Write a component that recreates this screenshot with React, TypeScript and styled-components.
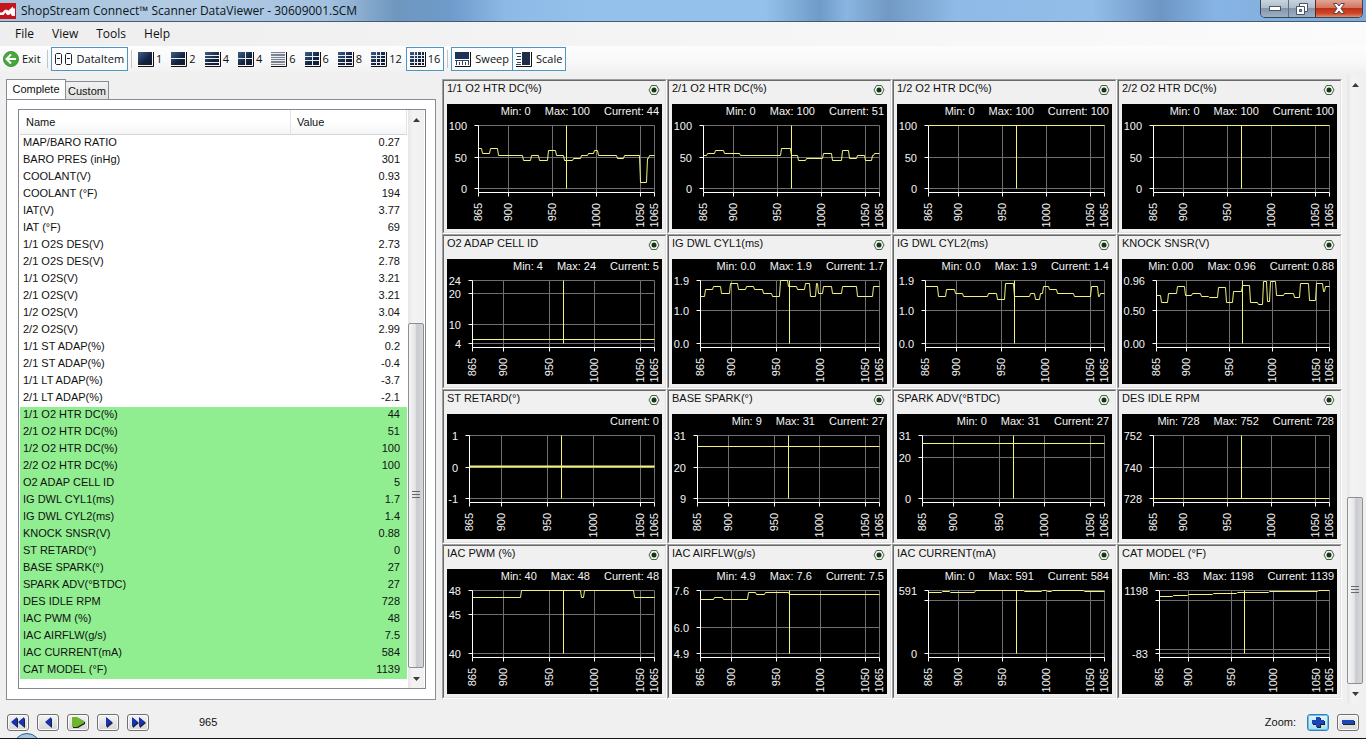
import React from 'react';
import styled, { createGlobalStyle, css } from 'styled-components';

const GlobalStyle = createGlobalStyle`
  * { box-sizing: border-box; }
  body {
    margin: 0;
    background: #f0f0f0;
    color: #111;
    font-family: "Liberation Sans", Arial, sans-serif;
    font-size: 11px;
    line-height: 17px;
  }
  button { font: inherit; color: inherit; margin: 0; padding: 0; cursor: default; }
`;

/* ---------- data ---------- */

type Level = [number, number];

interface Signal {
  name: string;
  stats: string[];
  ticks: { value: number; label?: string }[];
  plotLeft: number;
  trace: Level[];
  thick?: boolean;
}

const tick = (...labels: string[]) => labels.map((label) => ({ value: Number(label), label }));
const percent = tick('100', '50', '0');

const signals: Signal[] = [
  {
    name: '1/1 O2 HTR DC(%)', stats: ['Min: 0', 'Max: 100', 'Current: 44'], ticks: percent, plotLeft: 31,
    trace: [[31, 44], [35, 49], [43, 44], [51, 51], [76, 56], [84, 51], [92, 56], [101, 46], [109, 51], [117, 56], [126, 54], [134, 51], [141, 49], [147, 46], [151, 51], [170, 54], [177, 51], [193, 78], [200, 54], [202, 51]],
  },
  {
    name: '2/1 O2 HTR DC(%)', stats: ['Min: 0', 'Max: 100', 'Current: 51'], ticks: percent, plotLeft: 31,
    trace: [[31, 51], [35, 49], [43, 46], [52, 49], [68, 51], [109, 44], [119, 51], [126, 56], [134, 54], [151, 49], [160, 56], [170, 46], [177, 54], [185, 51], [193, 56], [200, 51], [202, 49]],
  },
  { name: '1/2 O2 HTR DC(%)', stats: ['Min: 0', 'Max: 100', 'Current: 100'], ticks: percent, plotLeft: 31, trace: [[31, 21]] },
  { name: '2/2 O2 HTR DC(%)', stats: ['Min: 0', 'Max: 100', 'Current: 100'], ticks: percent, plotLeft: 31, trace: [[31, 21]] },
  { name: 'O2 ADAP CELL ID', stats: ['Min: 4', 'Max: 24', 'Current: 5'], ticks: tick('24', '20', '10', '4'), plotLeft: 25, trace: [[25, 80]] },
  {
    name: 'IG DWL CYL1(ms)', stats: ['Min: 0.0', 'Max: 1.9', 'Current: 1.7'], ticks: tick('1.9', '1.0', '0.0'), plotLeft: 28,
    trace: [[28, 37], [33, 30], [41, 27], [49, 34], [58, 24], [66, 30], [74, 27], [82, 30], [91, 34], [100, 37], [108, 21], [116, 27], [125, 30], [133, 24], [138, 37], [144, 24], [146, 34], [151, 27], [160, 34], [170, 27], [185, 37], [201, 27]],
  },
  {
    name: 'IG DWL CYL2(ms)', stats: ['Min: 0.0', 'Max: 1.9', 'Current: 1.4'], ticks: tick('1.9', '1.0', '0.0'), plotLeft: 28,
    trace: [[28, 27], [41, 37], [49, 30], [58, 34], [66, 37], [91, 34], [100, 40], [108, 24], [117, 37], [133, 34], [138, 40], [143, 34], [146, 27], [152, 30], [160, 34], [177, 37], [194, 27], [201, 37], [203, 34]],
  },
  {
    name: 'KNOCK SNSR(V)', stats: ['Min: 0.00', 'Max: 0.96', 'Current: 0.88'], ticks: tick('0.96', '0.50', '0.00'), plotLeft: 34,
    trace: [[34, 36], [39, 43], [46, 34], [55, 27], [63, 36], [70, 34], [79, 37], [87, 38], [96, 28], [104, 43], [111, 32], [120, 26], [128, 43], [136, 45], [141, 22], [145, 42], [148, 22], [154, 36], [162, 34], [172, 38], [178, 24], [187, 41], [194, 24], [201, 32], [203, 27]],
  },
  { name: 'ST RETARD(°)', stats: ['Current: 0'], ticks: tick('1', '0', '-1'), plotLeft: 22, trace: [[22, 52]], thick: true },
  { name: 'BASE SPARK(°)', stats: ['Min: 9', 'Max: 31', 'Current: 27'], ticks: tick('31', '20', '9'), plotLeft: 25, trace: [[25, 32]] },
  { name: 'SPARK ADV(°BTDC)', stats: ['Min: 0', 'Max: 31', 'Current: 27'], ticks: tick('31', '20', '0'), plotLeft: 25, trace: [[25, 29]] },
  { name: 'DES IDLE RPM', stats: ['Min: 728', 'Max: 752', 'Current: 728'], ticks: tick('752', '740', '728'), plotLeft: 31, trace: [[31, 84]] },
  {
    name: 'IAC PWM (%)', stats: ['Min: 40', 'Max: 48', 'Current: 48'], ticks: tick('48', '45', '40'), plotLeft: 25,
    trace: [[25, 28], [74, 21], [134, 28], [137, 21], [187, 28]],
  },
  {
    name: 'IAC AIRFLW(g/s)', stats: ['Min: 4.9', 'Max: 7.6', 'Current: 7.5'], ticks: tick('7.6', '6.0', '4.9'), plotLeft: 28,
    trace: [[28, 30], [42, 28], [51, 30], [76, 23], [84, 25], [93, 23], [117, 25]],
  },
  {
    name: 'IAC CURRENT(mA)', stats: ['Min: 0', 'Max: 591', 'Current: 584'],
    ticks: [{ value: 591, label: '591' }, { value: 500 }, { value: 0, label: '0' }], plotLeft: 31,
    trace: [[31, 23], [45, 22], [53, 23], [78, 21], [127, 22], [145, 21], [150, 22], [155, 21], [187, 22]],
  },
  {
    name: 'CAT MODEL (°F)', stats: ['Min: -83', 'Max: 1198', 'Current: 1139'],
    ticks: [{ value: 1198, label: '1198' }, { value: 1000 }, { value: 0 }, { value: -83, label: '-83' }], plotLeft: 37,
    trace: [[37, 27], [51, 26], [66, 25], [91, 24], [115, 23], [147, 22], [196, 21]],
  },
];

const readings: [string, string, boolean?][] = [
  ['MAP/BARO RATIO', '0.27'], ['BARO PRES (inHg)', '301'], ['COOLANT(V)', '0.93'], ['COOLANT (°F)', '194'],
  ['IAT(V)', '3.77'], ['IAT (°F)', '69'], ['1/1 O2S DES(V)', '2.73'], ['2/1 O2S DES(V)', '2.78'],
  ['1/1 O2S(V)', '3.21'], ['2/1 O2S(V)', '3.21'], ['1/2 O2S(V)', '3.04'], ['2/2 O2S(V)', '2.99'],
  ['1/1 ST ADAP(%)', '0.2'], ['2/1 ST ADAP(%)', '-0.4'], ['1/1 LT ADAP(%)', '-3.7'], ['2/1 LT ADAP(%)', '-2.1'],
  ['1/1 O2 HTR DC(%)', '44', true], ['2/1 O2 HTR DC(%)', '51', true], ['1/2 O2 HTR DC(%)', '100', true],
  ['2/2 O2 HTR DC(%)', '100', true], ['O2 ADAP CELL ID', '5', true], ['IG DWL CYL1(ms)', '1.7', true],
  ['IG DWL CYL2(ms)', '1.4', true], ['KNOCK SNSR(V)', '0.88', true], ['ST RETARD(°)', '0', true],
  ['BASE SPARK(°)', '27', true], ['SPARK ADV(°BTDC)', '27', true], ['DES IDLE RPM', '728', true],
  ['IAC PWM (%)', '48', true], ['IAC AIRFLW(g/s)', '7.5', true], ['IAC CURRENT(mA)', '584', true],
  ['CAT MODEL (°F)', '1139', true],
];

const layouts: { cols: number; rows: number; label: string; pale?: boolean; active?: boolean }[] = [
  { cols: 1, rows: 1, label: '1' }, { cols: 1, rows: 2, label: '2' }, { cols: 1, rows: 4, label: '4' },
  { cols: 2, rows: 2, label: '4' }, { cols: 1, rows: 6, label: '6', pale: true }, { cols: 2, rows: 3, label: '6' },
  { cols: 2, rows: 4, label: '8' }, { cols: 3, rows: 4, label: '12' }, { cols: 4, rows: 4, label: '16', active: true },
];

/* ---------- window frame ---------- */

const Window = styled.div`
  min-height: 100vh;
  display: flex;
  flex-direction: column;
`;

const TitleBar = styled.header`
  height: 22px;
  display: flex;
  align-items: flex-start;
  border-bottom: 1px solid #47586f;
  background: linear-gradient(90deg, #a9c3dc 0, #b3cce4 14%, #a3c1df 24%, #6f97bf 29%, #6e9bcb 33%, #8db9e6 37%, #94c0ec 43%, #94c0ec 56%, #6f9bc8 60%, #8ab5e2 62%, #7199c3 65%, #8fbae7 70%, #93bde9 80%, #6d96c4 85%, #86b4e4 89%, #7fa9d6 100%);
`;

const AppMark = styled.svg`
  width: 16px;
  height: 16px;
  margin-top: 3px;
  flex: none;
`;

const Title = styled.h1`
  margin: 0 auto 0 5px;
  font: 400 12px/22px "Open Sans", sans-serif;
  color: #0c1420;
  white-space: nowrap;
`;

const FrameButtons = styled.div`
  display: flex;
  margin-right: 3px;
  border: 1px solid #35465a;
  border-top: 0;
  border-radius: 0 0 5px 5px;
  overflow: hidden;
`;

const FrameButton = styled.button<{ $danger?: boolean }>`
  width: ${(p) => (p.$danger ? 47 : 27)}px;
  height: 17px;
  border: 0;
  border-left: 1px solid ${(p) => (p.$danger ? '#5c2a26' : '#5d6f84')};
  display: grid;
  place-items: center;
  background: ${(p) => (p.$danger
    ? 'linear-gradient(#e3a594 0, #d27562 45%, #c02f16 50%, #cc4a2b 80%, #e58b66 100%)'
    : 'linear-gradient(#c9d4e0 0, #aebccb 45%, #8696a9 50%, #9bb0c6 100%)')};
  &:first-child { border-left: 0; }
`;

const MenuBar = styled.nav`
  height: 24px;
  display: flex;
  padding-left: 6px;
  background: linear-gradient(90deg, #eeeeef, #fbfbfb);
`;

const MenuItem = styled.button`
  border: 0;
  background: none;
  padding: 0 9px;
  font: 12px/24px "Open Sans", sans-serif;
`;

const Toolbar = styled.div`
  height: 29px;
  display: flex;
  align-items: flex-start;
  padding-top: 1px;
  background: linear-gradient(#fdfdfd, #f9f9f9 50%, #efefef);
`;

const ToolButton = styled.button<{ $active?: boolean; $gap?: number }>`
  height: 24px;
  display: flex;
  align-items: center;
  gap: ${(p) => p.$gap ?? 2}px;
  padding: 0 ${(p) => (p.$active ? 3 : 2)}px;
  border: 1px solid ${(p) => (p.$active ? '#4e96c0' : 'transparent')};
  background: ${(p) => (p.$active ? '#fbfdfe' : 'none')};
  font: 11px/22px "Open Sans", sans-serif;
`;

const LayoutTools = styled.div`
  display: flex;
  gap: 3px;
  ${ToolButton}:last-child { margin-left: -2px; }
`;

const JoinedTools = styled.div`
  display: flex;
  ${ToolButton} + ${ToolButton} { margin-left: -1px; }
`;

const Divider = styled.span`
  width: 1px;
  height: 18px;
  margin: 3px 3px 0;
  background: #c4c4c4;
`;

/* ---------- workspace ---------- */

const Workspace = styled.main`
  flex: 1;
  display: flex;
  padding-right: 3px;
`;

const Side = styled.section`
  width: 442px;
  flex: none;
  display: flex;
  flex-direction: column;
  padding: 4px 6px 3px;
`;

const Tabs = styled.div`
  display: flex;
  align-items: flex-end;
  height: 21px;
  margin-bottom: -1px;
`;

const Tab = styled.button<{ $active?: boolean }>`
  border: 1px solid #898c95;
  ${(p) => (p.$active
    ? css`width: 60px; height: 21px; background: #fff; border-bottom-color: #fff; padding-bottom: 2px;`
    : css`width: 43px; height: 19px; background: linear-gradient(#f2f2f2, #e0e0e0); border-left: 0;`)}
  line-height: 16px;
`;

const TabPage = styled.div`
  flex: 1;
  display: flex;
  background: #fff;
  border: 1px solid #898c95;
  padding: 9px 9px 10px 11px;
`;

const ListBox = styled.div`
  flex: 1;
  display: flex;
  gap: 1px;
  border: 1px solid #828790;
  padding: 0 1px;
`;

const ListArea = styled.div`
  flex: 1;
`;

const ReadingTable = styled.table`
  width: 100%;
  table-layout: fixed;
  border-collapse: separate;
  border-spacing: 0;
`;

const HeadCell = styled.th<{ $width?: number }>`
  ${(p) => p.$width && css`width: ${p.$width}px;`}
  height: 25px;
  padding: 0 6px;
  text-align: left;
  font-weight: 400;
  border-right: 1px solid #e2e3e6;
  border-bottom: 1px solid #d5d5d5;
  background: linear-gradient(#fff 50%, #f4f5f6);
`;

const ReadingRow = styled.tr<{ $plotted?: boolean }>`
  background: ${(p) => (p.$plotted ? '#90ee90' : '#fff')};
`;

const ReadingCell = styled.td<{ $numeric?: boolean }>`
  height: 17px;
  padding: 0 7px 0 3px;
  line-height: 14px;
  vertical-align: top;
  white-space: nowrap;
  text-align: ${(p) => (p.$numeric ? 'right' : 'left')};
`;

/* ---------- scroll bars ---------- */

const ScrollTrack = styled.div`
  width: 16px;
  flex: none;
  display: flex;
  flex-direction: column;
  background: linear-gradient(90deg, #e6e6e6, #f3f3f3 30%, #f0f0f0);
`;

const ScrollArrow = styled.button`
  height: 19px;
  border: 0;
  background: none;
  display: grid;
  place-items: center;
`;

const ScrollSpace = styled.div<{ $grow: number }>`
  flex: ${(p) => p.$grow} 0 0;
`;

const ScrollThumb = styled.div<{ $grow: number }>`
  flex: ${(p) => p.$grow} 0 0;
  display: grid;
  place-items: center;
  border: 1px solid #8e8f93;
  border-radius: 2px;
  background: linear-gradient(90deg, #f6f6f6, #e4e5e6 45%, #c9cacd 55%, #d7d8da);
`;

function ScrollBar({ before, thumb, after }: { before: number; thumb: number; after: number }) {
  return (
    <ScrollTrack>
      <ScrollArrow aria-label="Scroll up">
        <svg width="7" height="4"><path d="M0 4 3.500 0 7 4z" fill="#3b3b3b" /></svg>
      </ScrollArrow>
      <ScrollSpace $grow={before} />
      <ScrollThumb $grow={thumb}>
        <svg width="8" height="8"><path d="M0 .5h8M0 3.500h8M0 6.500h8" stroke="#66686c" /></svg>
      </ScrollThumb>
      <ScrollSpace $grow={after} />
      <ScrollArrow aria-label="Scroll down">
        <svg width="7" height="4"><path d="M0 0 3.500 4 7 0z" fill="#3b3b3b" /></svg>
      </ScrollArrow>
    </ScrollTrack>
  );
}

/* ---------- charts ---------- */

const ChartGrid = styled.section`
  flex: 1;
  min-width: 0;
  margin-right: 5px;
  padding: 4px 0;
  display: grid;
  grid-template-columns: repeat(4, minmax(0, 1fr));
  align-content: start;
`;

const ChartCard = styled.article`
  border: 1px solid;
  border-color: #a0a0a0 #fff #fff #a0a0a0;
`;

const ChartInset = styled.div`
  border: 1px solid;
  border-color: #696969 #e3e3e3 #e3e3e3 #696969;
  padding: 0 3px 3px;
`;

const ChartHead = styled.div`
  height: 23px;
  display: flex;
  justify-content: space-between;
`;

const ChartName = styled.h2`
  margin: 0;
  font-size: 11px;
  font-weight: 400;
  line-height: 14px;
  white-space: nowrap;
`;

const MarkerButton = styled.button`
  border: 0;
  background: none;
  width: 12px;
  height: 12px;
  margin: 3px 2px 0 0;
  svg { display: block; }
`;

const Scope = styled.div`
  background: #000;
  color: #f4f4f4;
`;

const Stats = styled.div`
  height: 15px;
  display: flex;
  justify-content: flex-end;
  gap: 14px;
  padding-right: 3px;
  line-height: 15px;
  white-space: nowrap;
`;

const Plot = styled.svg`
  display: block;
  width: 100%;
  height: auto;
  text { fill: #f4f4f4; font-size: 11px; }
`;

const PLOT_RIGHT = 207;
const PLOT_TOP = 21;
const PLOT_BOTTOM = 84;
const AXIS = 88;
const frames = [865, 900, 950, 1000, 1050, 1065];

function tracePath(levels: Level[]) {
  const [[x0, y0], ...rest] = levels;
  return `M${x0} ${y0}${rest.map(([x, y]) => `H${x - 1}L${x} ${y}`).join('')}H${PLOT_RIGHT}`;
}

function Chart({ signal }: { signal: Signal }) {
  const { name, stats, ticks, plotLeft, trace, thick } = signal;
  const max = ticks[0].value;
  const min = ticks[ticks.length - 1].value;
  const xOf = (frame: number) => plotLeft + Math.floor(((frame - 865) / 200) * (PLOT_RIGHT - plotLeft));
  const yOf = (value: number) => PLOT_TOP + Math.round(((max - value) / (max - min)) * (PLOT_BOTTOM - PLOT_TOP));
  return (
    <ChartCard>
      <ChartInset>
        <ChartHead>
          <ChartName>{name}</ChartName>
          <MarkerButton aria-label={`Options for ${name}`}>
            <svg width="12" height="12" viewBox="0 0 12 12">
              <path d="M3.500 1.500h5l2.500 4.500-2.500 4.500h-5L1 6z" fill="#edf5ea" stroke="#4a5c4a" />
              <circle cx="6" cy="6" r="2.500" fill="#173617" />
            </svg>
          </MarkerButton>
        </ChartHead>
        <Scope>
          <Stats>{stats.map((s) => <span key={s}>{s}</span>)}</Stats>
          <Plot viewBox="0 15 215 110" role="img" aria-label={`${name} chart`}>
            <g transform="translate(0.5 0.5)" fill="none">
              {frames.slice(1).map((f) => <path key={f} d={`M${xOf(f)} ${PLOT_TOP}V${AXIS}`} stroke="#707070" />)}
              {ticks.map((t) => <path key={t.value} d={`M${plotLeft} ${yOf(t.value)}H${PLOT_RIGHT}`} stroke="#707070" />)}
              {ticks.map((t) => <path key={t.value} d={`M${plotLeft - 4} ${yOf(t.value)}h4`} stroke="#fff" />)}
              {frames.map((f) => <path key={f} d={`M${xOf(f)} ${AXIS}v4`} stroke="#fff" />)}
              <path d={`M${plotLeft} ${PLOT_TOP}V${AXIS}H${PLOT_RIGHT}`} stroke="#fff" />
              <path d={tracePath(trace)} stroke="#f3f37c" strokeWidth={thick ? 2 : 1} />
              <path d={`M${xOf(965)} ${PLOT_TOP}V${PLOT_BOTTOM}`} stroke="#f3f37c" />
            </g>
            {ticks.map((t) => t.label && (
              <text key={t.value} x={plotLeft - 11} y={yOf(t.value) + 5} textAnchor="end">{t.label}</text>
            ))}
            {frames.map((f) => (
              <text key={f} transform={`translate(${xOf(f) + 4} 99) rotate(-90)`} textAnchor="end">{f}</text>
            ))}
          </Plot>
        </Scope>
      </ChartInset>
    </ChartCard>
  );
}

/* ---------- footer ---------- */

const Footer = styled.footer`
  position: relative;
  height: 36px;
  display: flex;
  align-items: flex-start;
  gap: 8px;
  padding: 11px 7px 0;
  border-bottom: 1px solid #14171d;
  overflow: hidden;
`;

const SmallButton = styled.button<{ $hot?: boolean }>`
  width: 22px;
  height: 17px;
  display: grid;
  place-items: center;
  border: 1px solid ${(p) => (p.$hot ? '#3c7fb1' : '#707070')};
  border-radius: 3px;
  background: ${(p) => (p.$hot ? 'linear-gradient(#e2f4fc, #a9dcf5)' : 'linear-gradient(#f4f4f4, #d6d6d6)')};
  box-shadow: ${(p) => (p.$hot ? 'inset 0 0 0 1px #5cc8ee' : 'inset 0 0 0 1px #fafafa')};
`;

const FrameNumber = styled.output`
  margin: 0 auto 0 42px;
`;

const ZoomLabel = styled.span`
  margin-right: 3px;
`;

const StartOrb = styled.span`
  position: absolute;
  left: 13px;
  top: 30px;
  width: 28px;
  height: 28px;
  border: 1px solid #33618a;
  border-radius: 50%;
  background: #a6c9e0;
`;

const playback: { label: string; path: string; fill: string }[] = [
  { label: 'First frame', path: 'M7 1v10L1 6zM14 1v10L8 6z', fill: '#1533b4' },
  { label: 'Previous frame', path: 'M11 1v10L5 6z', fill: '#1533b4' },
  { label: 'Play', path: 'M2 1v10h5l7-4V5L7 1z', fill: '#6fb52c' },
  { label: 'Next frame', path: 'M6 1v10l6-5z', fill: '#1533b4' },
  { label: 'Last frame', path: 'M2 1v10l6-5zM9 1v10l6-5z', fill: '#1533b4' },
];

/* ---------- toolbar icons ---------- */

function LayoutIcon({ cols, rows, pale }: { cols: number; rows: number; pale?: boolean }) {
  const id = `layout-${cols}-${rows}`;
  const lines: string[] = [];
  for (let c = 1; c < cols; c += 1) lines.push(`M${Math.round((c * 14) / cols) + 0.5} 0V14`);
  for (let r = 1; r < rows; r += 1) lines.push(`M0 ${Math.round((r * 14) / rows)}H14`);
  return (
    <svg width="16" height="16" viewBox="0 0 16 16" aria-hidden="true">
      <defs>
        <linearGradient id={id} x1="0" y1="0" x2="1" y2="1">
          <stop offset="0" stopColor={pale ? '#7f8ba0' : '#3e5f8a'} />
          <stop offset="0.600" stopColor={pale ? '#777f90' : '#13233f'} />
          <stop offset="1" stopColor={pale ? '#8b8b98' : '#101a2c'} />
        </linearGradient>
      </defs>
      <rect x="0" y="1" width="14" height="13" fill={`url(#${id})`} />
      <path d={lines.join('')} transform="translate(0 0.500)" stroke="#e9edf2" />
      <path d="M15.500 1v14.500H0" fill="none" stroke="#111" />
    </svg>
  );
}

export default function App() {
  return (
    <>
      <GlobalStyle />
      <Window>
        <TitleBar>
          <AppMark viewBox="0 0 16 16">
            <rect width="16" height="16" fill="#c4141c" />
            <path d="M0 9.500h2c1 0 2-3 4-3 1 0 1.500 1 2.500 1s1-2 2.500-2l1.500-2 1 2h1.500V13h-3l-1.500-2.500-1.500 1.500H7L5.500 9.500 3.500 12H0z" fill="#fff" />
          </AppMark>
          <Title>ShopStream Connect™ Scanner DataViewer - 30609001.SCM</Title>
          <FrameButtons>
            <FrameButton aria-label="Minimize">
              <svg width="12" height="5"><rect x="0.500" y="0.500" width="11" height="4" fill="#fff" stroke="#4b5563" /></svg>
            </FrameButton>
            <FrameButton aria-label="Restore">
              <svg width="12" height="12">
                <path d="M3.500 3V.5h8v8H9M.5 3.500h8v8h-8z" fill="#fff" stroke="#4b5563" />
                <path d="M3.500 6.500h2v2h-2z" fill="#8595a8" stroke="#4b5563" />
              </svg>
            </FrameButton>
            <FrameButton $danger aria-label="Close">
              <svg width="12" height="11">
                <path d="M.5.5h3.500L6 3 8 .5h3.500L8 5.500l3.500 5H8L6 8l-2 2.500H.5L4 5.500z" fill="#fff" stroke="#5a4448" />
              </svg>
            </FrameButton>
          </FrameButtons>
        </TitleBar>

        <MenuBar>
          {['File', 'View', 'Tools', 'Help'].map((m) => <MenuItem key={m}>{m}</MenuItem>)}
        </MenuBar>

        <Toolbar>
          <ToolButton $gap={3}>
            <svg width="16" height="16" viewBox="0 0 16 16" aria-hidden="true">
              <circle cx="8" cy="8" r="7.600" fill="#45a838" stroke="#2a7d22" strokeWidth="0.700" />
              <path d="M8 3.500 3.500 8 8 12.500M4 8h9" fill="none" stroke="#fff" strokeWidth="2" />
            </svg>
            Exit
          </ToolButton>
          <Divider />
          <ToolButton $active $gap={5}>
            <svg width="17" height="12" viewBox="0 0 17 12" aria-hidden="true">
              <path d="M1.500.5h4l1 1v9l-1 1h-4l-1-1v-9zM11.500.5h4l1 1v9l-1 1h-4l-1-1v-9zM2 5.500h3M12 5.500h3" fill="none" stroke="#222" />
            </svg>
            DataItem
          </ToolButton>
          <Divider />
          <LayoutTools>
            {layouts.map((l) => (
              <ToolButton key={`${l.cols}x${l.rows}`} $active={l.active}>
                <LayoutIcon cols={l.cols} rows={l.rows} pale={l.pale} />
                {l.label}
              </ToolButton>
            ))}
          </LayoutTools>
          <Divider />
          <JoinedTools>
            <ToolButton $active $gap={4}>
              <svg width="16" height="16" viewBox="0 0 16 16" aria-hidden="true">
                <rect x="0" y="1" width="14" height="7" fill="#1d3354" />
                <path d="M0 9.500h14M1.500 10v4M4.500 11v3M7.500 10v4M10.500 11v3M13.500 10v4" stroke="#33415a" />
                <path d="M15.500 1v14.500H0" fill="none" stroke="#111" />
              </svg>
              Sweep
            </ToolButton>
            <ToolButton $active $gap={4}>
              <svg width="16" height="16" viewBox="0 0 16 16" aria-hidden="true">
                <rect x="6" y="1" width="8" height="13" fill="#1d2c47" />
                <path d="M0 2.500h5M1 5.500h4M0 8.500h5M1 11.500h4M0 13.500h5" stroke="#33415a" />
                <path d="M15.500 1v14.500H0" fill="none" stroke="#111" />
              </svg>
              Scale
            </ToolButton>
          </JoinedTools>
        </Toolbar>

        <Workspace>
          <Side>
            <Tabs role="tablist">
              <Tab $active role="tab" aria-selected="true">Complete</Tab>
              <Tab role="tab" aria-selected="false">Custom</Tab>
            </Tabs>
            <TabPage>
              <ListBox>
                <ListArea>
                  <ReadingTable>
                    <thead>
                      <tr>
                        <HeadCell $width={271}>Name</HeadCell>
                        <HeadCell>Value</HeadCell>
                      </tr>
                    </thead>
                    <tbody>
                      {readings.map(([name, value, plotted]) => (
                        <ReadingRow key={name} $plotted={plotted}>
                          <ReadingCell>{name}</ReadingCell>
                          <ReadingCell $numeric>{value}</ReadingCell>
                        </ReadingRow>
                      ))}
                    </tbody>
                  </ReadingTable>
                </ListArea>
                <ScrollBar before={195} thumb={345} after={1} />
              </ListBox>
            </TabPage>
          </Side>
          <ChartGrid>
            {signals.map((s) => <Chart key={s.name} signal={s} />)}
          </ChartGrid>
          <ScrollBar before={407} thumb={187} after={0} />
        </Workspace>

        <Footer>
          {playback.map((b) => (
            <SmallButton key={b.label} aria-label={b.label}>
              <svg width="16" height="13" viewBox="0 0 16 13">
                <path d={b.path} transform="translate(1 1)" fill="#222" />
                <path d={b.path} fill={b.fill} />
              </svg>
            </SmallButton>
          ))}
          <FrameNumber>965</FrameNumber>
          <ZoomLabel>Zoom:</ZoomLabel>
          <SmallButton $hot aria-label="Zoom in">
            <svg width="15" height="13" viewBox="0 0 15 13">
              <path d="M6 2h4v3h4v4h-4v3H6V9H2V5h4z" fill="#222" />
              <path d="M5 1h4v3h4v4H9v3H5V8H1V4h4z" fill="#1a46b8" />
            </svg>
          </SmallButton>
          <SmallButton aria-label="Zoom out">
            <svg width="15" height="7" viewBox="0 0 15 7">
              <path d="M2 2h12v4H2z" fill="#222" />
              <path d="M1 1h12v4H1z" fill="#1a46b8" />
            </svg>
          </SmallButton>
          <StartOrb />
        </Footer>
      </Window>
    </>
  );
}
